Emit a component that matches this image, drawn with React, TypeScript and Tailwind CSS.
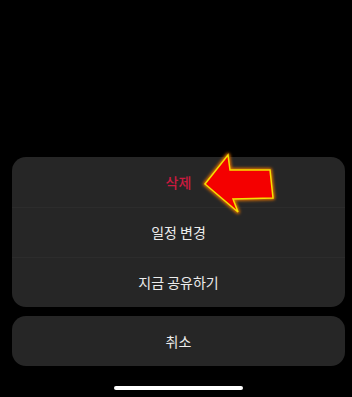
import React from 'react';

const ArrowMark: React.FC = () => (
    <svg className="absolute left-[190px] top-[145px]" width="100" height="80" viewBox="190 145 100 80">
        <defs>
            <filter id="glow" x="-20%" y="-20%" width="140%" height="140%">
                <feGaussianBlur stdDeviation="1.6" />
            </filter>
        </defs>
        <path
            d="M205 184 L228 155 L230 170 L270 170 L273 198 L233 199 L238 212 Z"
            fill="none"
            stroke="#e07000"
            strokeWidth="4"
            strokeLinejoin="round"
            filter="url(#glow)"
        />
        <path
            d="M205 184 L228 155 L230 170 L270 170 L273 198 L233 199 L238 212 Z"
            fill="#f40000"
            stroke="#f5e000"
            strokeWidth="1.5"
            strokeLinejoin="miter"
        />
    </svg>
);

const App: React.FC = () => {
    const rows = [
        { label: '삭제', danger: true },
        { label: '일정 변경', danger: false },
        { label: '지금 공유하기', danger: false },
    ];

    return (
        <div
            className="relative w-[352px] h-[397px] bg-black overflow-hidden"
            style={{ fontFamily: '"Noto Sans CJK KR", "Noto Sans", sans-serif' }}
        >
            <div className="flex flex-col px-3 pt-[157px]">
                <div className="w-[333px] rounded-[14px] bg-[#262626] flex flex-col">
                    {rows.map((row, i) => (
                        <div
                            key={row.label}
                            className={`h-[50px] flex items-center justify-center text-[14px] ${
                                i > 0 ? 'border-t border-[#2c2c2c]' : ''
                            } ${row.danger ? 'text-[#cc1a3f] font-medium' : 'text-[#ececec]'}`}
                        >
                            {row.label}
                        </div>
                    ))}
                </div>
                <div className="mt-[9px] w-[333px] h-[50px] rounded-[14px] bg-[#262626] flex items-center justify-center text-[14px] text-[#ececec]">
                    취소
                </div>
                <div className="mt-[20px] flex justify-center">
                    <div className="w-[129px] h-[4px] rounded-full bg-white ml-[5px]" />
                </div>
            </div>
            <ArrowMark />
        </div>
    );
};

export default App;
